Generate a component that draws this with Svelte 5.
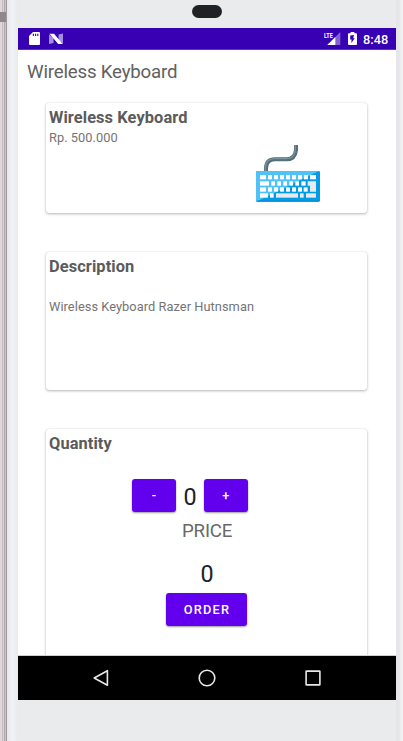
<script>
  let quantity = $state(0);
  const unit = 500000;
  const price = $derived(quantity * unit);

  const keys = [
    [177, 255, 18], [201, 255, 12], [219, 255, 12], [237, 255, 12], [255, 255, 12], [273, 255, 12], [291, 255, 12], [309, 255, 12], [327, 255, 18],
    [177, 274, 27], [211, 274, 11], [229, 274, 11], [247, 274, 11], [265, 274, 11], [283, 274, 11], [301, 274, 13],
    [177, 292, 18], [201, 292, 12], [219, 292, 12], [237, 292, 12], [255, 292, 12], [273, 292, 12], [291, 292, 12], [308, 292, 12],
    [177, 310, 24], [207, 310, 11], [225, 310, 66], [297, 310, 11], [315, 310, 30]
  ];
</script>

<div class="device">
  <div class="rail"><i></i></div>
  <div class="edge"></div>
  <div class="body">
    <div class="top"><div class="camera"></div></div>
    <div class="screen">
      <header class="status">
        <svg class="sd" width="11" height="13" viewBox="0 0 11 13"><path d="M4 0H10Q11 0 11 1V12Q11 13 10 13H1Q0 13 0 12V4Z" fill="#fff"/><path d="M4.4 1.7V4M6.6 1.7V4M8.8 1.7V4" stroke="#3700b3" stroke-width="1.1"/></svg>
        <svg class="n" width="14" height="12" viewBox="0 0 14 12"><path d="M0 1.5L4.5 5V10L0 11ZM9.5 1.5L14 0.5V10.5L9.5 7Z" fill="#a68ce0"/><path d="M0.5 0.8H5L13.8 10.9H9.2Z" fill="#fff"/></svg>
        <span class="grow"></span>
        <svg class="lte" width="17" height="17" viewBox="0 -3 17 17"><path d="M16.3 0V13H3.3Z" fill="#8560d2"/><path d="M11.3 5V13H3.3Z" fill="#fff"/><path d="M0 0H9V6.6H0Z" fill="#3700b3"/><text x="0" y="6" textLength="8.8" lengthAdjust="spacingAndGlyphs">LTE</text></svg>
        <svg class="battery" width="9" height="13" viewBox="0 0 9 13"><path d="M2.6 0H6.4V1.2H8Q9 1.2 9 2.2V12Q9 13 8 13H1Q0 13 0 12V2.2Q0 1.2 1 1.2H2.6Z" fill="#fff"/><path d="M6 3L2.2 3.6V7.6H3.6L3.3 11L6.8 6.2H5.2Z" fill="#3700b3"/></svg>
        <time>8:48</time>
      </header>
      <main>
        <h1>Wireless Keyboard</h1>
        <section class="card product">
          <div>
            <h2>Wireless Keyboard</h2>
            <p>Rp. 500.000</p>
          </div>
          <svg class="keyboard" width="64" height="57" viewBox="165 165 192 171">
            <path d="M195 244V235Q196 208 221 208H257Q282 208 285 180V165" fill="none" stroke="#546e7a" stroke-width="12"/>
            <path d="M193 244V235Q194 206 220 206H256Q280 206 283 180V165" fill="none" stroke="#78909c" stroke-width="4"/>
            <rect x="165" y="243" width="192" height="92" rx="4" fill="#039be5"/>
            <path d="M169 243H354L169 334Q165 334 165 330V247Q165 243 169 243Z" fill="#4fc3f7"/>
            <path d="M167 333.5H355" stroke="#0288d1" stroke-width="3"/>
            {#each keys as [x, y, w]}
              <rect {x} {y} width={w} height="13" fill={y > 305 && x > 210 ? '#e5ebee' : '#fafcfd'}/>
            {/each}
            <path d="M320 274H345V305H327V287H320Z" fill="#e5ebee"/>
          </svg>
        </section>
        <section class="card description">
          <h2>Description</h2>
          <p>Wireless Keyboard Razer Hutnsman</p>
        </section>
        <section class="card order">
          <h2>Quantity</h2>
          <div class="stepper">
            <button onclick={() => (quantity = Math.max(0, quantity - 1))}>-</button>
            <output>{quantity}</output>
            <button onclick={() => (quantity += 1)}>+</button>
          </div>
          <div class="label">PRICE</div>
          <output class="price">{price}</output>
          <button class="submit">ORDER</button>
        </section>
      </main>
      <nav>
        <svg width="18" height="18" viewBox="0 0 18 18"><path d="M15.4 1.7V16.3L2.2 9Z"/></svg>
        <svg width="18" height="18" viewBox="0 0 18 18"><circle cx="9" cy="9" r="7.8"/></svg>
        <svg width="18" height="18" viewBox="0 0 18 18"><rect x="2.1" y="2.1" width="13.8" height="13.8" rx=".5"/></svg>
      </nav>
    </div>
  </div>
  <div class="right"></div>
</div>

<style>
  .device { display: flex; width: 403px; height: 741px; overflow: hidden; background: #eaebed; font-family: Roboto, sans-serif; color: #616161; }
  .rail { width: 7px; flex: none; background: linear-gradient(90deg, #ded8db 0 2px, #c5bdc0 2px 3px, #d9d2d4 3px 4px, #b1a9ac 4px 5px, #c9c2c5 5px 6px, #a19a9e 6px 7px); }
  .rail i { display: block; width: 6px; height: 10px; margin-top: 12px; background: #8e888b; }
  .edge { width: 11px; flex: none; background: linear-gradient(90deg, #e7e8ec, #f2f3f6 50%, #e9eaec); }
  .body { width: 378px; flex: none; }
  .top { height: 28px; box-sizing: border-box; padding: 5px 0 0 174px; }
  .camera { width: 30px; height: 13px; border-radius: 6.5px; background: #202326; }
  .screen { height: 672px; display: flex; flex-direction: column; background: #fff; }
  .status { height: 22px; flex: none; display: flex; align-items: flex-start; box-sizing: border-box; background: #3700b3; border-bottom: 1px solid #5b35c0; color: #fff; }
  .sd { margin: 4px 0 0 11px; }
  .n { margin: 5px 0 0 9px; }
  .grow { flex: 1; }
  .lte { margin: 1px 7px 0 0; overflow: visible; }
  .lte text { font: 700 7.8px Roboto, sans-serif; fill: #fff; }
  .battery { margin-top: 4px; }
  time { width: 26px; margin: 4px 7px 0 6px; font-size: 12.8px; font-weight: 500; line-height: 15px; white-space: nowrap; }
  main { flex: 1; min-height: 0; overflow: hidden; padding: 0 29px 0 28px; }
  h1 { margin: 10px 0 0 -19px; font-size: 18.7px; font-weight: 400; line-height: 24px; height: 43px; letter-spacing: -.2px; white-space: nowrap; }
  h2 { margin: 0; font-size: 16.4px; font-weight: 700; line-height: 20px; letter-spacing: .09px; color: #5b5b5b; white-space: nowrap; }
  p { margin: 0; font-size: 12.8px; line-height: 16px; letter-spacing: .06px; color: #747474; white-space: nowrap; }
  .card { box-sizing: border-box; padding: 5px 3px; background: #fff; border-radius: 3px; box-shadow: 0 1px 3px rgba(0, 0, 0, .28), 0 0 1px rgba(0, 0, 0, .16); }
  .product { display: flex; height: 110px; margin-bottom: 39px; }
  .product > div { width: 207px; flex: none; }
  .product p { margin-top: 2px; }
  .keyboard { margin-top: 37px; flex: none; }
  .description { height: 138px; margin-bottom: 39px; }
  .description p { margin-top: 22px; }
  .order { height: 260px; }
  .stepper { display: flex; align-items: center; margin: 25px 0 0 83px; height: 33px; }
  output { width: 28px; text-align: center; font-size: 23.3px; line-height: 28px; color: #212121; }
  .stepper output { padding-top: 3px; }
  button { width: 44px; height: 33px; padding: 0 0 0 1px; border: 0; border-radius: 3px; background: #6200ee; color: #fff; font: 500 12.8px/34px Roboto, sans-serif; letter-spacing: 1.15px; box-shadow: 0 1px 2px rgba(0, 0, 0, .4); }
  .label { width: 50px; margin: 7px 0 0 133px; font-size: 18.7px; line-height: 24px; letter-spacing: -.2px; color: #686868; }
  .price { display: block; margin: 17px 0 0 144px; }
  .submit { display: block; width: 81px; margin: 5px 0 0 117px; }
  nav { height: 44px; flex: none; display: flex; justify-content: space-between; align-items: center; box-sizing: border-box; padding: 0 74px; background: #000; box-shadow: 0 -1px 0 #ccd0d0; }
  nav svg { fill: none; stroke: #e8e8e8; stroke-width: 1.6; stroke-linejoin: round; }
  .right { width: 7px; background: linear-gradient(90deg, #e6e6ea 0 3px, #f0f0f3 5px); }
</style>
